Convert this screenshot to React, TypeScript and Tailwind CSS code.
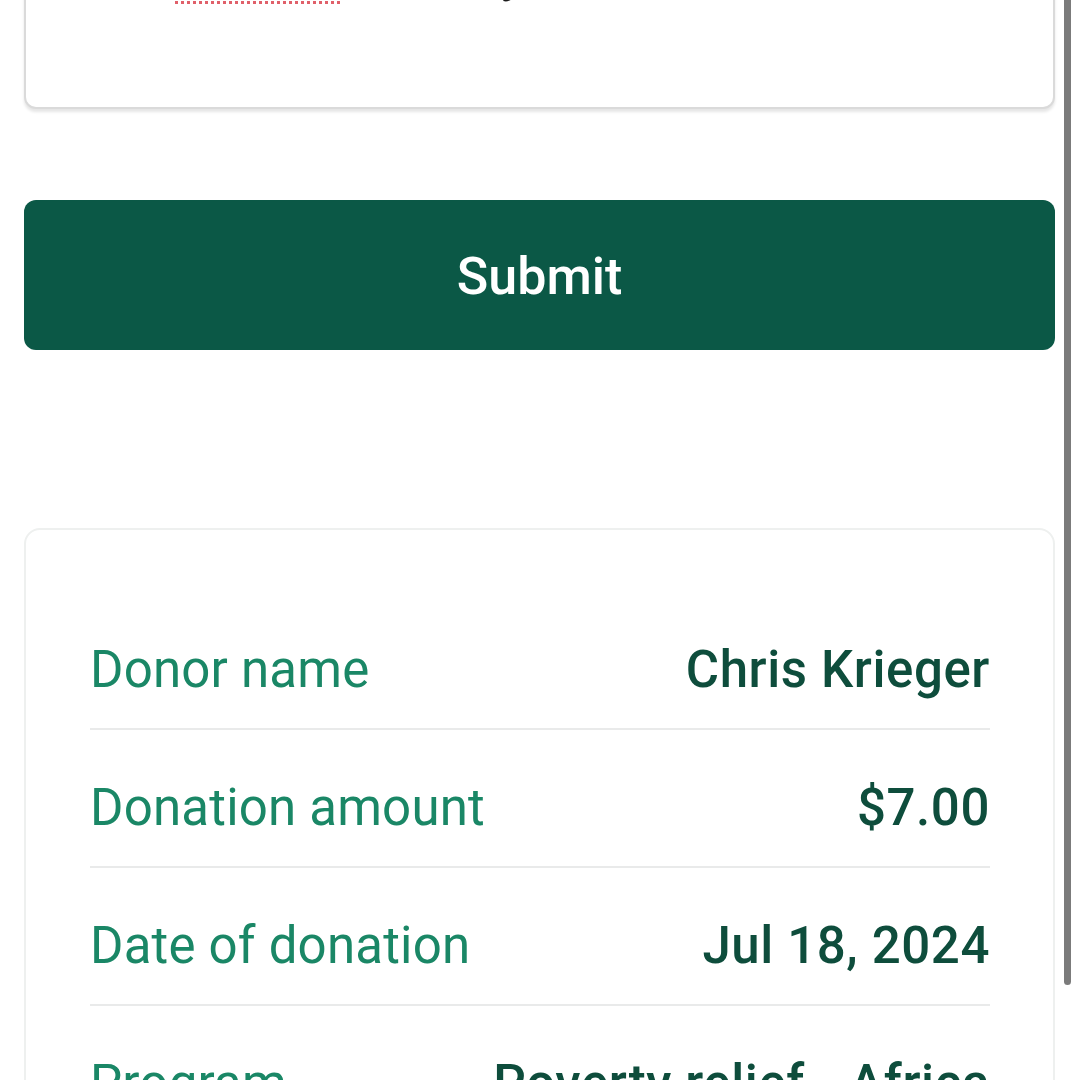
import React from "react"

const rows = [
  { label: "Donor name", value: "Chris Krieger" },
  { label: "Donation amount", value: "$7.00" },
  { label: "Date of donation", value: "Jul 18, 2024" },
  { label: "Program", value: "Poverty relief - Africa" },
]

export default function App() {
  return (
    <div
      className="relative w-[1080px] h-[1080px] overflow-hidden bg-white"
      style={{ fontFamily: "Roboto, 'Noto Sans', Arial, sans-serif" }}
    >
      <div className="pl-[24px] pr-[25px]">
        {/* message box, scrolled mostly out of view */}
        <div className="-mt-[120px] h-[229px] rounded-[12px] border-2 border-[#dadada] bg-white px-[34px] pt-[62px] shadow-[0_3px_3px_rgba(0,0,0,0.10)]">
          <p className="text-[50px] leading-[60px] text-[#1c1c1c] whitespace-nowrap">
            Dear{" "}
            <span className="underline decoration-dotted decoration-[#e0606a] decoration-[3px] underline-offset-[10px]">
              Chrisss
            </span>
            , thank you
          </p>
        </div>

        <button className="mt-[91px] flex h-[150px] w-full items-center justify-center rounded-[12px] bg-[#0b5846] pt-[3px] text-[52px] font-medium text-white">
          Submit
        </button>

        <div className="mt-[178px] rounded-[16px] border-2 border-[#eef0ef] bg-white pl-[64px] pr-[63px] pt-[62px]">
          {rows.map((row) => (
            <div
              key={row.label}
              className="flex items-center justify-between border-b-2 border-[#e9eaea] pt-[48px] pb-[28px]"
            >
              <span className="text-[51px] leading-[60px] tracking-[0.2px] text-[#1a8766]">{row.label}</span>
              <span className="text-[51px] leading-[60px] tracking-[0.6px] font-medium text-[#0e4d3c]">
                {row.value}
              </span>
            </div>
          ))}
        </div>
      </div>

      {/* scrollbar thumb */}
      <div className="absolute right-[9px] -top-[10px] h-[995px] w-[7px] rounded-full bg-[#7b7b7b]" />
    </div>
  )
}
